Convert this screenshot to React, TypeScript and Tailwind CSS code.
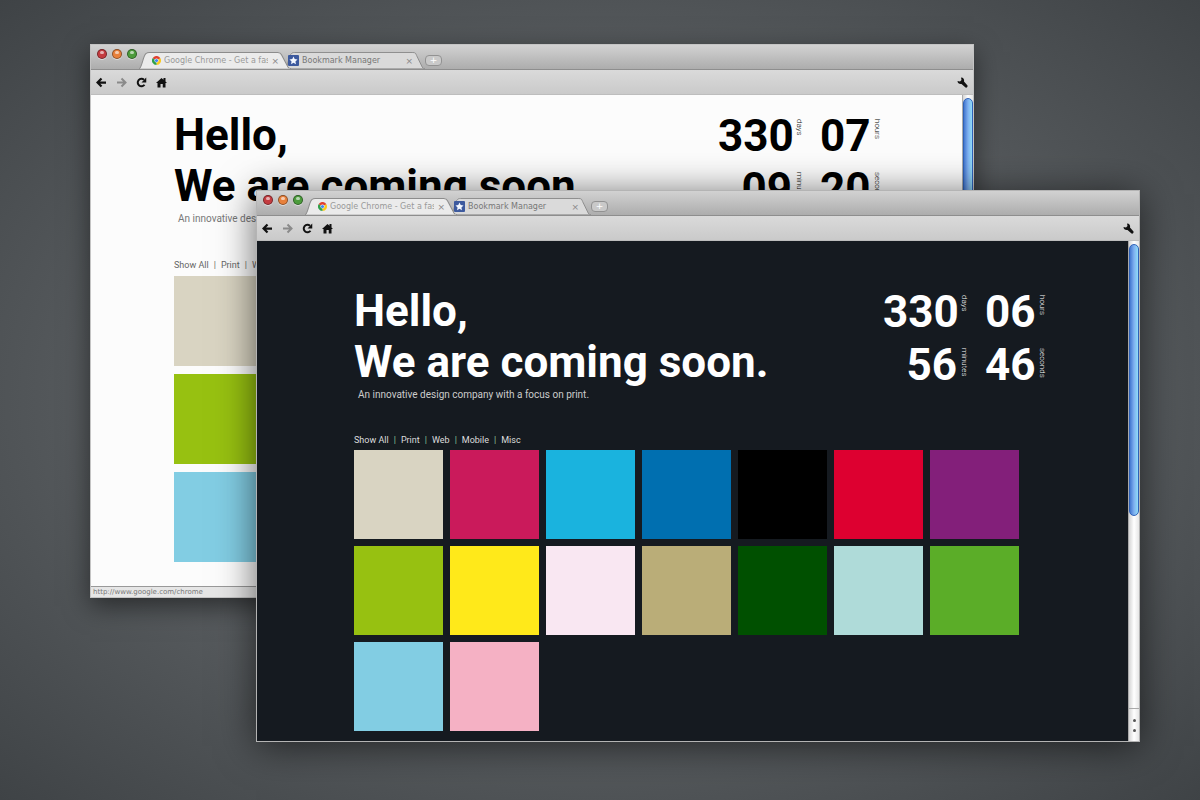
import React from "react";

type Theme = "light" | "dark";

const COLORS = [
  "bg-[#d9d4c2]", "bg-[#ca1a5b]", "bg-[#1ab3de]", "bg-[#006fb0]", "bg-[#000000]", "bg-[#dd0030]", "bg-[#831f7a]",
  "bg-[#97c111]", "bg-[#ffe91a]", "bg-[#f9e7f2]", "bg-[#baad78]", "bg-[#005000]", "bg-[#afdbd9]", "bg-[#5bad28]",
  "bg-[#82cde3]", "bg-[#f5b1c4]",
];
const LIGHT_COLORS = [COLORS[0], COLORS[7], COLORS[14]];
const FILTERS = ["Show All", "Print", "Web", "Mobile", "Misc"];

function Light({ tone, label }: { tone: string; label: string }) {
  return (
    <button
      aria-label={label}
      className={`flex h-[10px] w-[10px] justify-center rounded-full border border-black/40 pt-px shadow-[0_1px_0_rgba(255,255,255,0.5)] ${tone}`}
    >
      <span className="h-[3px] w-[4px] rounded-full bg-white/60" />
    </button>
  );
}

function ChromeLogo() {
  return (
    <svg viewBox="0 0 20 20" className="h-[9px] w-[9px] shrink-0">
      <path d="M10 10 1.3 5A10 10 0 0 1 18.7 5Z" fill="#e0402f" />
      <path d="M10 10 18.7 5A10 10 0 0 1 10 20Z" fill="#fbc91c" />
      <path d="M10 10V20A10 10 0 0 1 1.3 5Z" fill="#2fa04a" />
      <circle cx="10" cy="10" r="4.6" fill="#fff" />
      <circle cx="10" cy="10" r="3.6" fill="#4285f4" />
    </svg>
  );
}

function BookmarkLogo() {
  return (
    <svg viewBox="0 0 22 22" className="h-[11px] w-[11px] shrink-0">
      <rect width="22" height="22" rx="2" fill="#3d5a9e" />
      <path d="m11 3 2.4 5.2 5.6.7-4.1 3.9 1 5.7-4.9-2.8-4.9 2.8 1-5.7L3 8.9l5.6-.7Z" fill="#f4f8ff" />
    </svg>
  );
}

function Tab({ active, icon, title, width }: { active?: boolean; icon: React.ReactNode; title: string; width: string }) {
  return (
    <div className={`relative flex h-[17px] items-center ${width} ${active ? "z-10" : ""}`}>
      <svg viewBox="0 0 150 17" preserveAspectRatio="none" className="absolute inset-0 h-full w-full">
        <path
          d="M0 17C3 16 4 3 7 1.5 8 .6 9 .5 10 .5H137c3 0 3 1 4 3L147 15c1 1.5 2 2 3 2Z"
          fill={active ? "#ebebeb" : "#dadada"}
          stroke="#8c8c8c"
        />
        <path d="M1 17H149" stroke={active ? "#e2e2e2" : "#a0a0a0"} />
      </svg>
      <div className={`relative flex w-full items-center gap-[3px] pr-[12px] ${active ? "pl-[13px]" : "pl-[3px]"}`}>
        {icon}
        <span
          className={`min-w-0 flex-1 overflow-hidden text-[8px] leading-[12px] whitespace-nowrap ${active ? "text-[#999]" : "text-[#777]"}`}
        >
          {title}
        </span>
        <button aria-label="Close tab" className="text-[9px] leading-[12px] text-[#888]">×</button>
      </div>
    </div>
  );
}

function TitleBar() {
  return (
    <div className="flex h-[25px] items-end border-b border-[#8e8e8e] bg-linear-to-b from-[#d2d2d2] to-[#adadad]">
      <div className="flex gap-[5px] self-start pt-[4px] pl-[6px]">
        <Light label="Close" tone="bg-[#c43c40]" />
        <Light label="Minimize" tone="bg-[#e8813c]" />
        <Light label="Zoom" tone="bg-[#4c9c3c]" />
      </div>
      <div className="flex items-end pl-[2px] font-['DejaVu_Sans',sans-serif]">
        <Tab active icon={<ChromeLogo />} title="Google Chrome - Get a fast" width="w-[152px]" />
        <div className="-ml-[6px]">
          <Tab icon={<BookmarkLogo />} title="Bookmark Manager" width="w-[140px]" />
        </div>
        <button
          aria-label="New tab"
          className="mb-[3px] flex h-[11px] w-[17px] items-center justify-center rounded-[4px] border border-[#929292] bg-[#c9c9c9] text-[9px] leading-none text-white"
        >
          +
        </button>
      </div>
    </div>
  );
}

function Toolbar() {
  return (
    <div className="flex h-[25px] items-center gap-[9px] border-b border-[#bdbdbd] bg-linear-to-b from-[#dadada] to-[#cacaca] pr-[5px] pl-[5px]">
      <button aria-label="Back">
        <svg viewBox="0 0 22 22" className="h-[11px] w-[11px]">
          <path d="M20 11H5M11 3 3 11l8 8" fill="none" stroke="#111" strokeWidth="4.5" />
        </svg>
      </button>
      <button aria-label="Forward">
        <svg viewBox="0 0 22 22" className="h-[11px] w-[11px]">
          <path d="M2 11H17M11 3l8 8-8 8" fill="none" stroke="#8a8a8a" strokeWidth="4" />
        </svg>
      </button>
      <button aria-label="Reload">
        <svg viewBox="0 0 22 22" className="h-[11px] w-[11px]">
          <path d="M17 15.5A7.5 7.5 0 1 1 16 5.5" fill="none" stroke="#111" strokeWidth="4" />
          <path d="M20.500 1V11H11Z" fill="#111" />
        </svg>
      </button>
      <button aria-label="Home">
        <svg viewBox="0 0 22 22" className="h-[11px] w-[11px]">
          <path d="M11 2 15 5.500V2H19V9L22 12H19V21H13.500V14H9V21H3V12H0Z" fill="#111" />
        </svg>
      </button>
      <button aria-label="Tools" className="ml-auto">
        <svg viewBox="0 0 22 22" className="h-[11px] w-[11px]">
          <path d="M8 1C13 1 15 5 14 9L21 17C22 20 19 22 17 21L9 14C5 15 1 12 1 8L6 9 9 6Z" fill="#111" />
        </svg>
      </button>
    </div>
  );
}

function Unit({ value, label, width }: { value: string; label: string; width: string }) {
  return (
    <div className="flex justify-end gap-[3px]">
      <span className={`text-right text-[44px] leading-[53px] font-bold ${width}`}>{value}</span>
      <span className="mt-[9px] h-[34px] text-[8px] leading-[8px] font-light [writing-mode:vertical-rl]">{label}</span>
    </div>
  );
}

function ScrollBar({ thumb }: { thumb: string }) {
  return (
    <div className="flex w-[11px] shrink-0 flex-col border-l border-[#aaa] bg-linear-to-r from-[#d5d5d5] via-white to-[#e6e6e6] pt-[3px]">
      <div
        className={`rounded-[5px] border border-[#2f62b8] bg-linear-to-r from-[#4377cf] via-[#7fb0f0] to-[#8fdcf8] ${thumb}`}
      />
      <div className="mt-auto flex h-[33px] flex-col items-center justify-center gap-[7px] border-t border-[#aaa]">
        <span className="h-[3px] w-[3px] rounded-full bg-[#555]" />
        <span className="h-[3px] w-[3px] rounded-full bg-[#555]" />
      </div>
    </div>
  );
}

function Page({ theme, times }: { theme: Theme; times: [string, string, string, string] }) {
  const dark = theme === "dark";
  return (
    <div className={`min-w-0 flex-1 ${dark ? "bg-[#151a20] pt-[45px] pl-[97px] text-white" : "bg-[#fcfcfc] pt-[15px] pl-[83px] text-black"}`}>
      <header className={`flex items-start justify-between ${dark ? "pr-[82px]" : "pr-[81px]"}`}>
        <div>
          <h1 className="text-[44px] leading-[51px] font-bold whitespace-nowrap">
            Hello,
            <br />
            We are coming soon.
          </h1>
          <p className={`pl-[4px] text-[10px] leading-[14px] ${dark ? "text-[#ccc]" : "text-[#777]"}`}>
            An innovative design company with a focus on print.
          </p>
        </div>
        <div className="grid grid-cols-[auto_auto] gap-x-[17px]">
          <Unit value={times[0]} label="days" width="w-[74px]" />
          <Unit value={times[1]} label="hours" width="w-[50px]" />
          <Unit value={times[2]} label="minutes" width="w-[74px]" />
          <Unit value={times[3]} label="seconds" width="w-[50px]" />
        </div>
      </header>
      <nav className={`flex gap-[5px] text-[9px] leading-[12px] ${dark ? "mt-[32px] text-[#ddd]" : "mt-[33px] text-[#666]"}`}>
        {FILTERS.map((name, i) => (
          <React.Fragment key={name}>
            {i > 0 && <span className={dark ? "text-[#8fc79a]" : ""}>|</span>}
            <a href="#work" className="whitespace-nowrap">{name}</a>
          </React.Fragment>
        ))}
      </nav>
      <div id="work" className={dark ? "mt-[4px] grid grid-cols-[repeat(7,89px)] gap-[7px]" : "mt-[5px] grid grid-cols-[90px] gap-[8px]"}>
        {(dark ? COLORS : LIGHT_COLORS).map((c) => (
          <div key={c} className={`${dark ? "h-[89px]" : "h-[90px]"} ${c}`} />
        ))}
      </div>
    </div>
  );
}

export default function App() {
  return (
    <main className="relative min-h-screen overflow-hidden bg-[radial-gradient(ellipse_at_center,#74787b_0%,#5e6265_45%,#3f4346_100%)] font-[Roboto,sans-serif]">
      <section
        aria-label="Light theme"
        className="absolute top-[44px] left-[90px] flex h-[554px] w-[884px] flex-col border border-[#c4c4c4] bg-white shadow-[0_8px_24px_rgba(0,0,0,0.5)]"
      >
        <TitleBar />
        <Toolbar />
        <div className="flex min-h-0 flex-1">
          <Page theme="light" times={["330", "07", "09", "20"]} />
          <ScrollBar thumb="h-[260px]" />
        </div>
        <footer className="border-t border-[#999] bg-[#e6e6e6] pl-[2px] font-['DejaVu_Sans',sans-serif] text-[7px] leading-[10px] text-[#777]">
          http://www.google.com/chrome
        </footer>
      </section>
      <section
        aria-label="Dark theme"
        className="absolute top-[190px] left-[256px] flex h-[552px] w-[884px] flex-col border border-[#b4b4b4] bg-[#151a20] shadow-[0_4px_36px_rgba(0,0,0,0.6)]"
      >
        <TitleBar />
        <Toolbar />
        <div className="flex min-h-0 flex-1">
          <Page theme="dark" times={["330", "06", "56", "46"]} />
          <ScrollBar thumb="h-[272px]" />
        </div>
      </section>
    </main>
  );
}
